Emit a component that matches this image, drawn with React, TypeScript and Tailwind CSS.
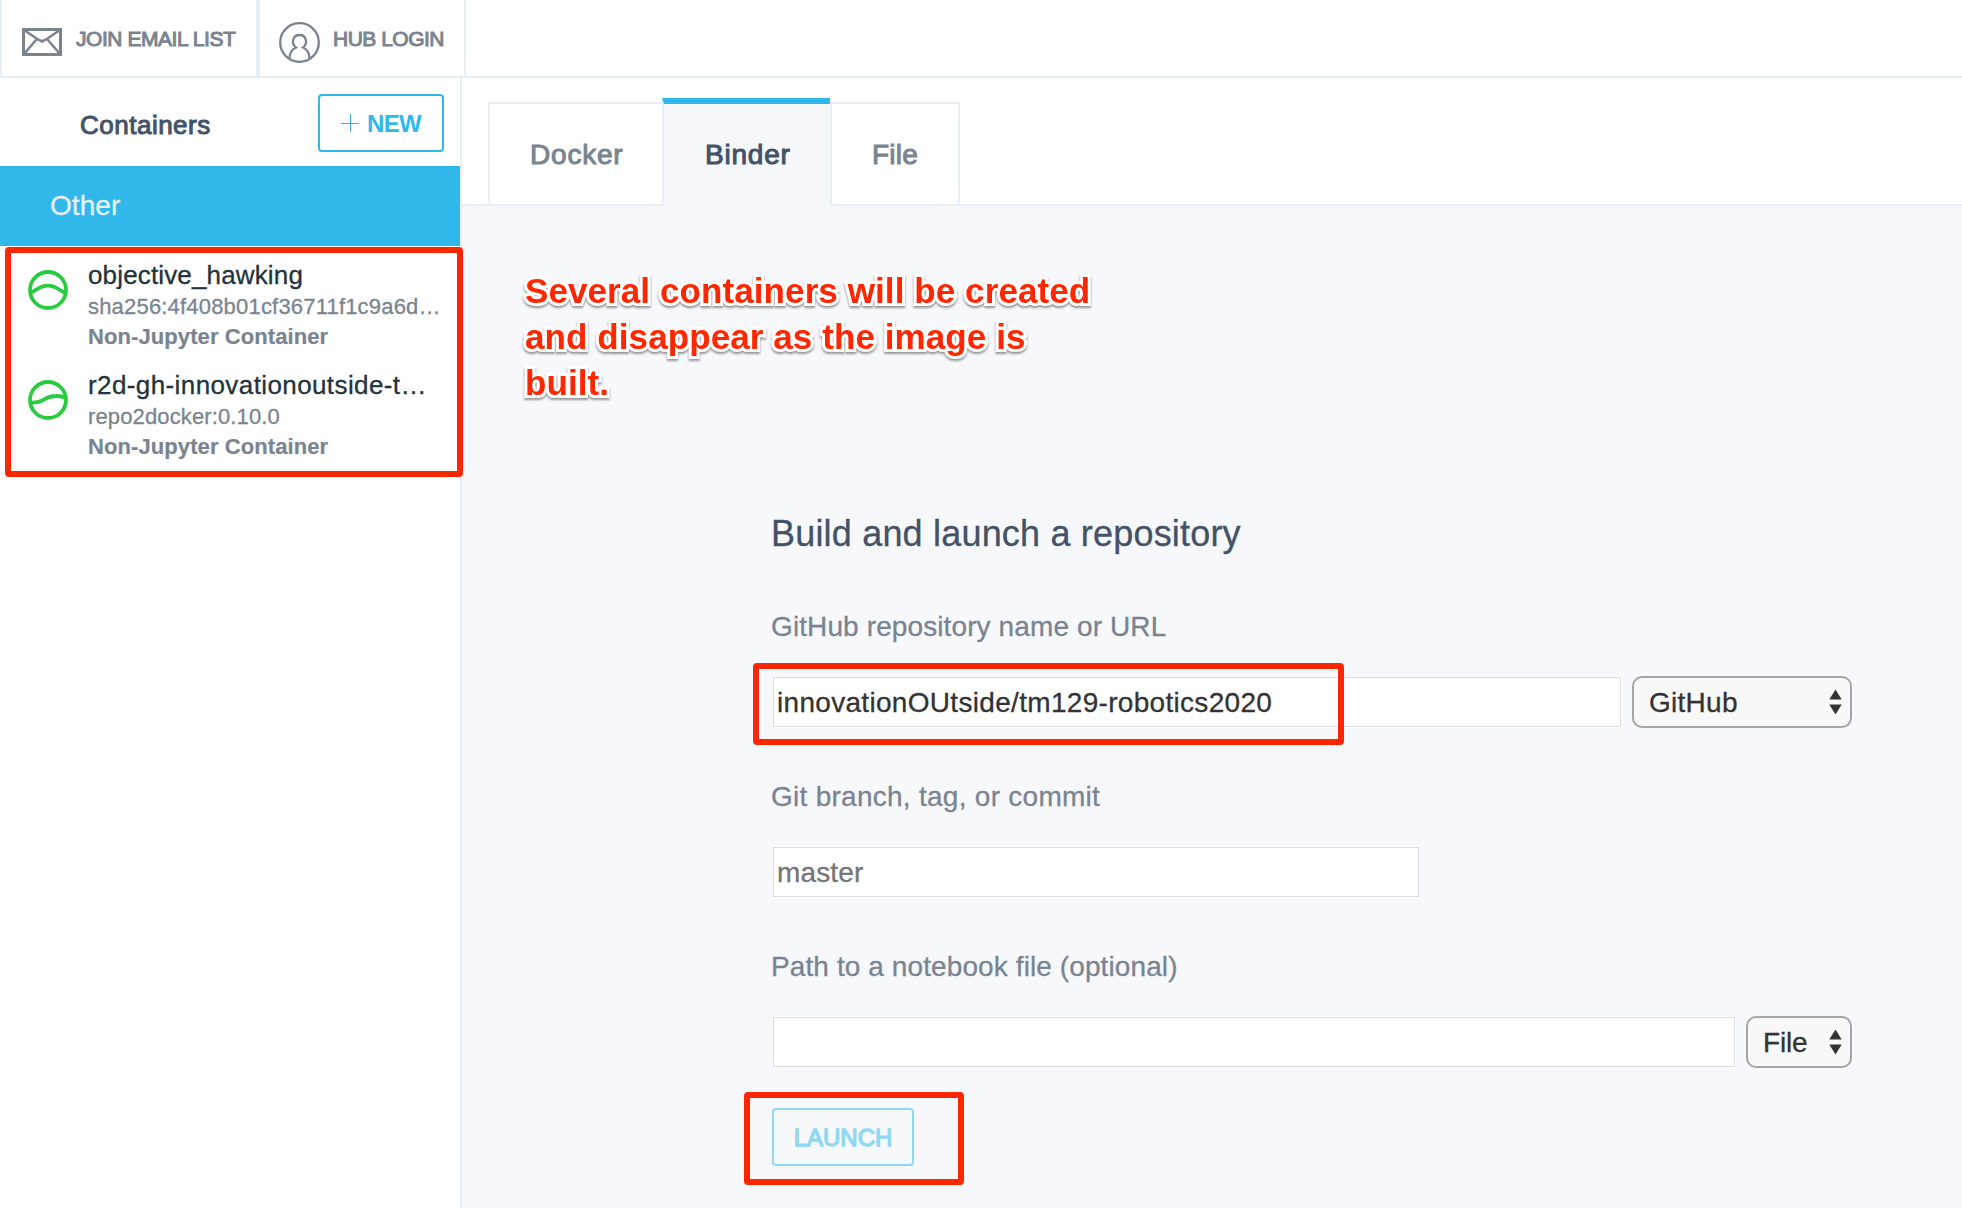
import React from "react";

const medium = "[-webkit-text-stroke:1px_currentColor]";
const regular = "[-webkit-text-stroke:0.3px_currentColor]";

type ItemProps = {
  name: string;
  image: string;
  curve: string;
  nameClass: string;
  imageClass: string;
};

function Item({ name, image, curve, nameClass, imageClass }: ItemProps) {
  return (
    <div className="flex h-[110px] pl-7">
      <svg className="mt-6 h-10 w-10 shrink-0" viewBox="0 0 40 40" fill="none" stroke="#29cc41" strokeWidth="3.8">
        <circle cx="20" cy="20" r="18" />
        <path d={curve} />
      </svg>
      <div className="whitespace-pre pl-[20px] pt-[14px] text-[22px] leading-[30px] text-[#7a8491]">
        <div className={"text-[26px] text-[#22333b] " + regular + " " + nameClass}>{name}</div>
        <div className={"mt-[2px] " + regular + " " + imageClass}>{image}</div>
        <div className="font-bold tracking-[0.09px] [-webkit-text-stroke:0.2px_currentColor]">Non-Jupyter Container</div>
      </div>
    </div>
  );
}

function Select({ className, children }: { className: string; children: React.ReactNode }) {
  return (
    <div
      className={
        "flex h-[52px] items-center justify-between rounded-[10px] border-2 border-[#a5a5a5] bg-[#f8f8f8] pl-[15px] pr-2 text-[28px] leading-[31px] text-[#333] " +
        regular + " " + className
      }
    >
      <span>{children}</span>
      <svg className="h-[26px] w-[13px]" viewBox="0 0 13 26" fill="#333">
        <path d="M6.5 0.5 12.7 10.5H.3zM6.5 25.5 12.7 15.5H.3z" />
      </svg>
    </div>
  );
}

function Field({ className, children }: { className: string; children?: React.ReactNode }) {
  return (
    <div className={"h-[52px] border border-white bg-white " + className}>
      <div className={"h-full border border-[#dddddd] pl-[3px] pt-[9px] text-[28px] leading-[31px] " + regular}>{children}</div>
    </div>
  );
}

const label = "ml-px text-[28px] leading-[31px] text-[#7a8491] " + regular;
const tabText = "text-[28px] leading-[31px] " + medium;
const callout = "absolute rounded-[4px] border-[6px] border-[#ff2600] ";

export default function App() {
  return (
    <div className="relative flex h-[1208px] w-[1962px] flex-col overflow-hidden bg-white font-['Liberation_Sans',Arial,sans-serif]">
      <header className="flex h-[78px] border-b-2 border-[#e7eef6]">
        <div className="flex w-[258px] border-x-2 border-[#e7eef6] pl-5 pt-7">
          <svg className="h-7 w-10" viewBox="0 0 40 28" fill="none" stroke="#7a8491" strokeWidth="3">
            <rect x="1.5" y="1.5" width="37" height="25" />
            <path d="M2 2 16 11.500 20 13.500 24 11.500 38 2M2 26 14.500 11.500M38 26 25.500 11.500" strokeWidth="2.6" />
          </svg>
          <span className={"ml-[14px] -mt-[2px] whitespace-pre text-[21px] leading-[26px] tracking-[-0.45px] text-[#7a8491] " + medium}>
            JOIN EMAIL LIST
          </span>
        </div>
        <div className="flex w-[208px] border-x-2 border-[#e7eef6] pl-[19px] pt-[22px]">
          <svg className="h-[41px] w-[41px]" viewBox="0 0 41 41" fill="none" stroke="#7a8491" strokeWidth="2.3">
            <circle cx="20.5" cy="20.5" r="19.3" />
            <path d="M10.500 36.500C10.500 31 12.500 27.500 17 25.500C11.500 21 14 13 20.500 13S29.500 21 24 25.500C28.500 27.500 30.500 31 30.500 36.500" />
          </svg>
          <span className={"ml-[13px] mt-[4px] whitespace-pre text-[21px] leading-[26px] tracking-[-0.5px] text-[#7a8491] " + medium}>
            HUB LOGIN
          </span>
        </div>
      </header>

      <div className="flex min-h-0 flex-1">
        <aside className="w-[462px] border-r-2 border-[#e7eef6]">
          <div className="flex h-[88px] items-start justify-between pl-[80px] pr-4 pt-4">
            <h2 className={"mt-4 text-[26px] leading-[30px] tracking-[0.5px] text-[#445268] " + medium}>Containers</h2>
            <div className="flex h-[58px] w-[126px] items-center rounded-[4px] border-2 border-[#30b8ea] pl-[21px] text-[#30b8ea]">
              <svg className="h-[18px] w-[18px]" viewBox="0 0 18 18" stroke="currentColor">
                <path d="M9.500 0V18M0 9.500H18" />
              </svg>
              <span className="ml-[8px] mt-px text-[24px] leading-[28px] font-bold tracking-[-0.7px]">NEW</span>
            </div>
          </div>
          <div className={"flex h-20 items-center bg-[#30b8ea] pl-[50px] text-[28px] leading-[32px] text-[#e7eef6] " + regular}>
            <span className="tracking-[0.07px]">Other</span>
          </div>
          <Item
            name="objective_hawking"
            image="sha256:4f408b01cf36711f1c9a6d…"
            nameClass="tracking-[0.15px]"
            imageClass="tracking-[0.19px]"
            curve="M2 22.500C8 22 10 15.700 20 15.700S32 22.500 38 22.500"
          />
          <Item
            name="r2d-gh-innovationoutside-t…"
            image="repo2docker:0.10.0"
            nameClass="tracking-[0.4px]"
            imageClass="tracking-[0.13px]"
            curve="M2 22.500C18 23.500 14 16 28 16C33 15.800 36 17 38 18"
          />
        </aside>

        <main className="flex min-w-0 flex-1 flex-col bg-[#f7f8fc]">
          <div className="flex h-32 items-end border-b-2 border-[#e7eef6] bg-white pl-[26px]">
            <div className="flex h-[102px] w-[174px] items-center border-l-2 border-t-2 border-[#e7eef6] pl-[40px]">
              <span className={"tracking-[0.8px] text-[#7a8491] " + tabText}>Docker</span>
            </div>
            <div className="-mb-[2px] h-[108px] w-[168px] border-l-2 border-t-[6px] border-l-[#e7eef6] border-t-[#30b8ea] bg-[#f7f8fc] pl-[41px] pt-[35px]">
              <span className={"block tracking-[0.8px] text-[#445268] " + tabText}>Binder</span>
            </div>
            <div className="flex h-[102px] w-[130px] items-center border-x-2 border-t-2 border-[#e7eef6] pl-[40px]">
              <span className={"tracking-[0.2px] text-[#7a8491] " + tabText}>File</span>
            </div>
          </div>

          <div className="flex w-[1390px] flex-col whitespace-pre pl-[308px] pt-[306px]">
            <h1 className={"ml-px text-[36px] leading-[43px] tracking-[0.19px] text-[#445268] " + regular}>Build and launch a repository</h1>
            <div className={"mt-14 tracking-[0.11px] " + label}>GitHub repository name or URL</div>
            <div className="ml-[2px] mt-[34px] flex gap-[10px]">
              <Field className="w-[850px] text-[#333]">
                <span className="tracking-[0.31px]">innovationOUtside/tm129-robotics2020</span>
              </Field>
              <Select className="w-[220px] tracking-[0.28px]">GitHub</Select>
            </div>
            <div className={"mt-[53px] tracking-[0.27px] " + label}>Git branch, tag, or commit</div>
            <div className="ml-[2px] mt-[34px]">
              <Field className="w-[648px] text-[#757575]">
                <span className="tracking-[0.15px]">master</span>
              </Field>
            </div>
            <div className={"mt-[53px] tracking-[0.1px] " + label}>Path to a notebook file (optional)</div>
            <div className="ml-[2px] mt-[34px] flex gap-[10px]">
              <Field className="w-[964px]" />
              <Select className="w-[106px] tracking-[-0.18px]">File</Select>
            </div>
            <div className="ml-[2px] mt-10 flex h-[58px] w-[142px] items-center justify-center rounded-[4px] border-2 border-[#8fd8f3] text-[#8fd8f3]">
              <span className="mt-[2px] text-[24px] leading-[28px] [-webkit-text-stroke:1.3px_currentColor]">LAUNCH</span>
            </div>
          </div>
        </main>
      </div>

      <div className={callout + "left-[5px] top-[247px] h-[230px] w-[458px]"} />
      <div className={callout + "left-[753px] top-[663px] h-[82px] w-[591px]"} />
      <div className={callout + "left-[744px] top-[1092px] h-[93px] w-[220px]"} />
      <div className="absolute left-[525px] top-[268px] whitespace-pre text-[35px] leading-[46px] font-bold tracking-[0.09px] text-[#ff2600] [paint-order:stroke_fill] [-webkit-text-stroke:6px_white] [filter:drop-shadow(0_2px_1px_rgba(0,0,0,0.4))]">
        <div>Several containers will be created</div>
        <div>and disappear as the image is</div>
        <div>built.</div>
      </div>
    </div>
  );
}
